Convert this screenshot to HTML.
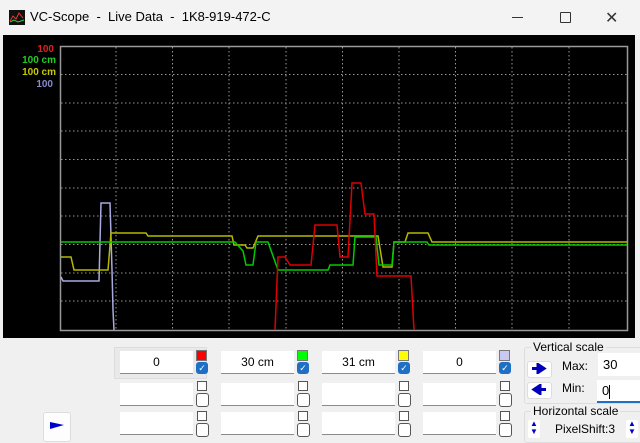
<!DOCTYPE html>
<html><head><meta charset="utf-8"><style>
body{margin:0;width:640px;height:438px;overflow:hidden;background:#f0f0f0;font-family:"Liberation Sans",sans-serif;position:relative}
.a{position:absolute}
.tb{left:0;top:0;width:640px;height:35px;background:#f3f3f3}
.tf{background:#fff;border-bottom:1px solid #8a8a8a;height:22px;width:73px;font-size:12px;text-align:center;line-height:22px;color:#000}
.cs{width:9px;height:9px;border:1px solid #777}
.cb{width:12px;height:12px;border-radius:3px;background:#1f6fc5;color:#fff;font-size:9px;text-align:center;line-height:12px}
.sq{width:8px;height:8px;border:1px solid #555;background:#fff}
.rb{width:11px;height:12px;border:1px solid #555;border-radius:3px;background:#fff}
.lbl{font-size:12px;color:#000}
</style></head><body>
<div class="a tb"></div>
<svg class="a" style="left:9px;top:10px" width="16" height="15"><rect width="16" height="15" fill="#111"/><polyline points="1,11 4,6 7,9 10,3 14,8" stroke="#e33" fill="none"/><polyline points="1,12 5,10 9,12 15,10" stroke="#3c3" fill="none"/></svg>
<div class="a" style="left:30px;top:9px;font-size:13px;color:#000;white-space:pre">VC-Scope  -  Live Data  -  1K8-919-472-C</div>
<div class="a" style="left:512px;top:17px;width:11px;height:1px;background:#333"></div>
<div class="a" style="left:560px;top:12px;width:9px;height:9px;border:1px solid #333;border-radius:1px"></div>
<div class="a" style="left:605px;top:8px;font-size:16px;color:#333">✕</div>
<svg class="a" style="left:0;top:35px" width="640" height="304">
<rect x="3" y="0" width="632" height="303" fill="#000"/>
<g transform="translate(0,-35)">
<rect x="60.5" y="46.5" width="567" height="284" fill="none" stroke="#999" stroke-width="1.5"/>
<g stroke="#999" stroke-width="1" stroke-dasharray="1.5,2.5">
<line x1="116" y1="47" x2="116" y2="330"/><line x1="172.5" y1="47" x2="172.5" y2="330"/><line x1="229" y1="47" x2="229" y2="330"/><line x1="286" y1="47" x2="286" y2="330"/><line x1="342.5" y1="47" x2="342.5" y2="330"/><line x1="399" y1="47" x2="399" y2="330"/><line x1="455.5" y1="47" x2="455.5" y2="330"/><line x1="512" y1="47" x2="512" y2="330"/><line x1="569" y1="47" x2="569" y2="330"/>
<line x1="61" y1="74.5" x2="627" y2="74.5"/><line x1="61" y1="103" x2="627" y2="103"/><line x1="61" y1="131" x2="627" y2="131"/><line x1="61" y1="159.5" x2="627" y2="159.5"/><line x1="61" y1="188" x2="627" y2="188"/><line x1="61" y1="216" x2="627" y2="216"/><line x1="61" y1="244.5" x2="627" y2="244.5"/><line x1="61" y1="273" x2="627" y2="273"/><line x1="61" y1="301" x2="627" y2="301"/>
</g>
<g fill="none" stroke-width="1.5">
<polyline stroke="#aaaadd" points="61,277 63,281 99,281 101,203 110,203 112,270 113,310 114,330"/>
<polyline stroke="#b8b800" points="61,257 71,257 74,270 108,270 111,233 146,233 148,236 232,236 234,245 245,245 247,248 253,248 258,236 378,236 383,267 392,267 394,242 405,242 408,233 428,233 432,242 627,242"/>
<polyline stroke="#00cc00" points="61,242 232,242 235,242 243,251 246,265 253,265 256,242 266,242 268,242 278,270 328,270 330,265 353,265 355,237 376,237 379,265 392,265 394,242 427,242 429,245 627,245"/>
<polyline stroke="#dd0000" points="275,330 278,257 285,257 290,265 311,265 315,225 337,225 340,257 348,257 352,183 361,183 365,214 374,214 377,276 411,276 414,330"/>
</g>
</g>
<g font-size="10" font-weight="bold" text-anchor="end">
<text x="54" y="17" fill="#dd2222">100</text>
<text x="56" y="28" fill="#22cc22">100 cm</text>
<text x="56" y="40" fill="#c8c800">100 cm</text>
<text x="53" y="52" fill="#8888cc">100</text>
</g>
</svg>
<div class="a" style="left:114px;top:347px;width:91px;height:30px;background:#e9e9e9;border:1px solid #ddd"></div>
<div class="a tf" style="left:120px;top:351px">0</div>
<div class="a tf" style="left:120px;top:383px"></div>
<div class="a tf" style="left:120px;top:412px"></div>
<div class="a cs" style="left:196px;top:350px;background:#f00"></div>
<div class="a cb" style="left:196px;top:362px">✓</div>
<div class="a sq" style="left:197px;top:381px"></div><div class="a rb" style="left:196px;top:393px"></div>
<div class="a sq" style="left:197px;top:411px"></div><div class="a rb" style="left:196px;top:423px"></div>

<div class="a tf" style="left:221px;top:351px">30 cm</div>
<div class="a tf" style="left:221px;top:383px"></div>
<div class="a tf" style="left:221px;top:412px"></div>
<div class="a cs" style="left:297px;top:350px;background:#0f0"></div>
<div class="a cb" style="left:297px;top:362px">✓</div>
<div class="a sq" style="left:298px;top:381px"></div><div class="a rb" style="left:297px;top:393px"></div>
<div class="a sq" style="left:298px;top:411px"></div><div class="a rb" style="left:297px;top:423px"></div>

<div class="a tf" style="left:322px;top:351px">31 cm</div>
<div class="a tf" style="left:322px;top:383px"></div>
<div class="a tf" style="left:322px;top:412px"></div>
<div class="a cs" style="left:398px;top:350px;background:#ff0"></div>
<div class="a cb" style="left:398px;top:362px">✓</div>
<div class="a sq" style="left:399px;top:381px"></div><div class="a rb" style="left:398px;top:393px"></div>
<div class="a sq" style="left:399px;top:411px"></div><div class="a rb" style="left:398px;top:423px"></div>

<div class="a tf" style="left:423px;top:351px">0</div>
<div class="a tf" style="left:423px;top:383px"></div>
<div class="a tf" style="left:423px;top:412px"></div>
<div class="a cs" style="left:499px;top:350px;background:#c8c8f0"></div>
<div class="a cb" style="left:499px;top:362px">✓</div>
<div class="a sq" style="left:500px;top:381px"></div><div class="a rb" style="left:499px;top:393px"></div>
<div class="a sq" style="left:500px;top:411px"></div><div class="a rb" style="left:499px;top:423px"></div>

<div class="a" style="left:43px;top:412px;width:26px;height:28px;background:#fdfdfd;border:1px solid #ddd;border-radius:3px"></div>
<svg class="a" style="left:49px;top:419px" width="16" height="12"><polygon points="1,3 15,6 1,10" fill="#0000cc"/></svg>

<div class="a" style="left:524px;top:347px;width:120px;height:55px;border:1px solid #ddd;border-radius:3px"></div>
<div class="a lbl" style="left:531px;top:340px;background:#f0f0f0;padding:0 2px">Vertical scale</div>
<div class="a" style="left:527px;top:361px;width:23px;height:15px;background:#fff;border-radius:3px;border:1px solid #ddd"></div>
<svg class="a" style="left:531px;top:363px" width="16" height="11"><path d="M1 5.5H10M7 1.5L13 5.5L7 9.5Z" stroke="#0000bb" stroke-width="3" fill="#0000bb"/></svg>
<div class="a" style="left:527px;top:382px;width:23px;height:15px;background:#fff;border-radius:3px;border:1px solid #ddd"></div>
<svg class="a" style="left:531px;top:384px" width="16" height="11"><path d="M15 5.5H6M9 1.5L3 5.5L9 9.5Z" stroke="#0000bb" stroke-width="3" fill="#0000bb"/></svg>
<div class="a lbl" style="left:562px;top:359px">Max:</div>
<div class="a lbl" style="left:562px;top:381px">Min:</div>
<div class="a" style="left:598px;top:353px;width:42px;height:23px;background:#fff;font-size:13px;line-height:23px;padding-left:5px">30</div>
<div class="a" style="left:597px;top:380px;width:43px;height:21px;background:#fff;border-bottom:2px solid #1f6fc5;font-size:13px;line-height:21px;padding-left:5px">0<span style="display:inline-block;width:1px;height:14px;background:#000;vertical-align:middle"></span></div>
<div class="a" style="left:524px;top:411px;width:120px;height:30px;border:1px solid #ddd;border-radius:3px"></div>
<div class="a lbl" style="left:531px;top:404px;background:#f0f0f0;padding:0 2px">Horizontal scale</div>
<div class="a" style="left:528px;top:420px;width:12px;height:18px;background:#fff;border-radius:2px;color:#0000cc;font-size:8px;line-height:8px;text-align:center">▲<br>▼</div>
<div class="a lbl" style="left:555px;top:422px">PixelShift:3</div>
<div class="a" style="left:626px;top:420px;width:12px;height:18px;background:#fff;border-radius:2px;color:#0000cc;font-size:8px;line-height:8px;text-align:center">▲<br>▼</div>
</body></html>
